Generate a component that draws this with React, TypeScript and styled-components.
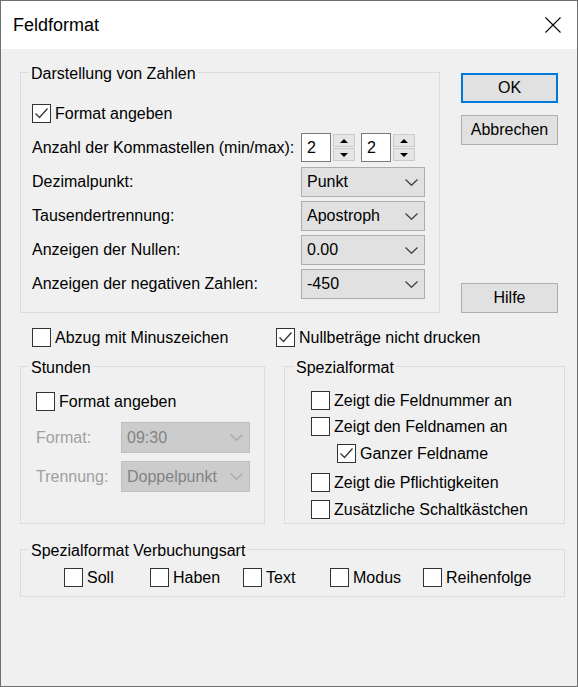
import React from 'react';
import styled, { createGlobalStyle } from 'styled-components';

const GlobalStyle = createGlobalStyle`
  body {
    margin: 0;
    background: #ffffff;
  }
`;

const Window = styled.div`
  width: 578px;
  height: 687px;
  box-sizing: border-box;
  border: 1px solid #6f6f6f;
  display: flex;
  flex-direction: column;
  font-family: 'Liberation Sans', Arial, sans-serif;
  font-size: 16px;
  color: #000;
  overflow: hidden;
`;

const TitleBar = styled.div`
  height: 48px;
  flex-shrink: 0;
  background: #ffffff;
  display: flex;
  align-items: center;
  justify-content: space-between;
  padding: 0 16px 0 12px;
`;

const Title = styled.div`
  font-size: 18px;
`;

const Body = styled.div`
  flex: 1;
  background: #f0f0f0;
  padding: 13px 0 0 19px;
`;

const TopSection = styled.div`
  display: flex;
  align-items: stretch;
`;

const GroupBox = styled.fieldset<{ $w: number }>`
  width: ${(p) => p.$w}px;
  box-sizing: border-box;
  min-width: 0;
  margin: 0;
  padding: 0;
  border: 1px solid #dcdcdc;
`;

const Legend = styled.legend<{ $indent?: number }>`
  margin-left: ${(p) => p.$indent ?? 8}px;
  padding: 4px 2px 0;
  line-height: 16px;
  font-size: 16px;
`;

const GroupContent = styled.div<{ $pad: string }>`
  padding: ${(p) => p.$pad};
`;

const ButtonColumn = styled.div`
  display: flex;
  flex-direction: column;
  margin-left: 21px;
  padding-top: 11px;
  width: 97px;
`;

// $top: 'auto' pushes the button to the bottom of the column
const DlgButton = styled.button<{ $default?: boolean; $top?: string }>`
  width: 97px;
  height: 30px;
  flex-shrink: 0;
  box-sizing: border-box;
  background: #e1e1e1;
  border: ${(p) => (p.$default ? '2px solid #0078d7' : '1px solid #adadad')};
  font-family: inherit;
  font-size: 16px;
  color: #000;
  padding: 0;
  margin-top: ${(p) => p.$top ?? '0'};
`;

const CheckRow = styled.label<{ $top?: number; $indent?: number; $w?: number }>`
  display: flex;
  align-items: center;
  gap: 4px;
  height: 19px;
  margin-top: ${(p) => p.$top ?? 0}px;
  margin-left: ${(p) => p.$indent ?? 0}px;
  width: ${(p) => (p.$w ? `${p.$w}px` : 'auto')};
  flex-shrink: 0;
  white-space: nowrap;
`;

const Box = styled.span`
  width: 19px;
  height: 19px;
  box-sizing: border-box;
  border: 1px solid #333333;
  background: #ffffff;
  display: flex;
  align-items: center;
  justify-content: center;
  flex-shrink: 0;
`;

const FieldRow = styled.div<{ $top: number; $label: number; $h: number }>`
  display: grid;
  grid-template-columns: ${(p) => p.$label}px auto;
  align-items: center;
  height: ${(p) => p.$h}px;
  margin-top: ${(p) => p.$top}px;
`;

const FieldLabel = styled.span<{ $disabled?: boolean }>`
  color: ${(p) => (p.$disabled ? '#a0a0a0' : '#000')};
  white-space: nowrap;
`;

const Select = styled.div<{ $w: number; $disabled?: boolean }>`
  width: ${(p) => p.$w}px;
  height: 100%;
  box-sizing: border-box;
  background: ${(p) => (p.$disabled ? '#cccccc' : '#e1e1e1')};
  border: 1px solid ${(p) => (p.$disabled ? '#bfbfbf' : '#adadad')};
  color: ${(p) => (p.$disabled ? '#838383' : '#000')};
  display: flex;
  align-items: center;
  justify-content: space-between;
  padding: 0 6px 0 5px;
`;

const Spinners = styled.div`
  display: flex;
  gap: 6px;
  height: 100%;
`;

const SpinGroup = styled.div`
  display: flex;
  height: 100%;
  gap: 2px;
`;

const SpinInput = styled.div`
  width: 30px;
  height: 100%;
  box-sizing: border-box;
  background: #ffffff;
  border: 1px solid #7a7a7a;
  padding-left: 5px;
  display: flex;
  align-items: center;
`;

const SpinButtons = styled.div`
  width: 22px;
  display: flex;
  flex-direction: column;
  justify-content: space-between;
  padding: 1px 0;
`;

const SpinHalf = styled.div`
  height: 13px;
  box-sizing: border-box;
  background: #e5e5e5;
  border: 1px solid #cccccc;
  display: flex;
  align-items: center;
  justify-content: center;
`;

const OptionRow = styled.div`
  display: flex;
  margin-top: 15px;
  padding-left: 12px;
`;

const GroupRow = styled.div<{ $top: number }>`
  display: flex;
  gap: 19px;
  margin-top: ${(p) => p.$top}px;
`;

const BookingRow = styled.div`
  display: flex;
`;

const Check = ({ on }: { on?: boolean }) => (
  <Box>
    {on && (
      <svg width="17" height="17" viewBox="0 0 17 17">
        <polyline points="2.5,8.5 6.5,12.5 14.5,3.5" fill="none" stroke="#3a3a3a" strokeWidth="1.4" />
      </svg>
    )}
  </Box>
);

const Chevron = ({ color = '#3c3c3c' }: { color?: string }) => (
  <svg width="13" height="7" viewBox="0 0 13 7">
    <polyline points="0.5,0.5 6.5,6.3 12.5,0.5" fill="none" stroke={color} strokeWidth="1.2" />
  </svg>
);

const Arrow = ({ up }: { up?: boolean }) => (
  <svg width="8" height="4" viewBox="0 0 8 4">
    <polygon points={up ? '0,4 4,0 8,4' : '0,0 8,0 4,4'} fill="#000" />
  </svg>
);

const Spinner = ({ value }: { value: string }) => (
  <SpinGroup>
    <SpinInput>{value}</SpinInput>
    <SpinButtons>
      <SpinHalf>
        <Arrow up />
      </SpinHalf>
      <SpinHalf>
        <Arrow />
      </SpinHalf>
    </SpinButtons>
  </SpinGroup>
);

const App = () => {
  return (
    <>
      <GlobalStyle />
      <Window>
        <TitleBar>
          <Title>Feldformat</Title>
          <svg width="16" height="16" viewBox="0 0 16 16">
            <path d="M0.5 0.5 L15.5 15.5 M15.5 0.5 L0.5 15.5" stroke="#000" strokeWidth="1.1" />
          </svg>
        </TitleBar>

        <Body>
          <TopSection>
            <GroupBox $w={420}>
              <Legend>Darstellung von Zahlen</Legend>
              <GroupContent $pad="22px 0 13px 11px">
                <CheckRow>
                  <Check on />
                  Format angeben
                </CheckRow>
                <FieldRow $top={10} $label={269} $h={29}>
                  <FieldLabel>Anzahl der Kommastellen (min/max):</FieldLabel>
                  <Spinners>
                    <Spinner value="2" />
                    <Spinner value="2" />
                  </Spinners>
                </FieldRow>
                <FieldRow $top={5} $label={269} $h={30}>
                  <FieldLabel>Dezimalpunkt:</FieldLabel>
                  <Select $w={124}>
                    Punkt
                    <Chevron />
                  </Select>
                </FieldRow>
                <FieldRow $top={4} $label={269} $h={30}>
                  <FieldLabel>Tausendertrennung:</FieldLabel>
                  <Select $w={124}>
                    Apostroph
                    <Chevron />
                  </Select>
                </FieldRow>
                <FieldRow $top={4} $label={269} $h={30}>
                  <FieldLabel>Anzeigen der Nullen:</FieldLabel>
                  <Select $w={124}>
                    0.00
                    <Chevron />
                  </Select>
                </FieldRow>
                <FieldRow $top={4} $label={269} $h={30}>
                  <FieldLabel>Anzeigen der negativen Zahlen:</FieldLabel>
                  <Select $w={124}>
                    -450
                    <Chevron />
                  </Select>
                </FieldRow>
              </GroupContent>
            </GroupBox>

            <ButtonColumn>
              <DlgButton $default>OK</DlgButton>
              <DlgButton $top="12px">Abbrechen</DlgButton>
              <DlgButton $top="auto">Hilfe</DlgButton>
            </ButtonColumn>
          </TopSection>

          <OptionRow>
            <CheckRow $w={244}>
              <Check />
              Abzug mit Minuszeichen
            </CheckRow>
            <CheckRow>
              <Check on />
              Nullbeträge nicht drucken
            </CheckRow>
          </OptionRow>

          <GroupRow $top={9}>
            <GroupBox $w={245}>
              <Legend>Stunden</Legend>
              <GroupContent $pad="16px 0 0 15px">
                <CheckRow>
                  <Check />
                  Format angeben
                </CheckRow>
                <FieldRow $top={11} $label={85} $h={31}>
                  <FieldLabel $disabled>Format:</FieldLabel>
                  <Select $w={129} $disabled>
                    09:30
                    <Chevron color="#a8a8a8" />
                  </Select>
                </FieldRow>
                <FieldRow $top={8} $label={85} $h={31}>
                  <FieldLabel $disabled>Trennung:</FieldLabel>
                  <Select $w={129} $disabled>
                    Doppelpunkt
                    <Chevron color="#a8a8a8" />
                  </Select>
                </FieldRow>
              </GroupContent>
            </GroupBox>

            <GroupBox $w={281}>
              <Legend $indent={9}>Spezialformat</Legend>
              <GroupContent $pad="15px 0 4px 26px">
                <CheckRow>
                  <Check />
                  Zeigt die Feldnummer an
                </CheckRow>
                <CheckRow $top={7}>
                  <Check />
                  Zeigt den Feldnamen an
                </CheckRow>
                <CheckRow $top={8} $indent={26}>
                  <Check on />
                  Ganzer Feldname
                </CheckRow>
                <CheckRow $top={10}>
                  <Check />
                  Zeigt die Pflichtigkeiten
                </CheckRow>
                <CheckRow $top={8}>
                  <Check />
                  Zusätzliche Schaltkästchen
                </CheckRow>
              </GroupContent>
            </GroupBox>
          </GroupRow>

          <GroupRow $top={15}>
            <GroupBox $w={545}>
              <Legend>Spezialformat Verbuchungsart</Legend>
              <GroupContent $pad="9px 0 9px 43px">
                <BookingRow>
                  <CheckRow $w={86}>
                    <Check />
                    Soll
                  </CheckRow>
                  <CheckRow $w={93}>
                    <Check />
                    Haben
                  </CheckRow>
                  <CheckRow $w={87}>
                    <Check />
                    Text
                  </CheckRow>
                  <CheckRow $w={93}>
                    <Check />
                    Modus
                  </CheckRow>
                  <CheckRow>
                    <Check />
                    Reihenfolge
                  </CheckRow>
                </BookingRow>
              </GroupContent>
            </GroupBox>
          </GroupRow>
        </Body>
      </Window>
    </>
  );
};

export default App;
